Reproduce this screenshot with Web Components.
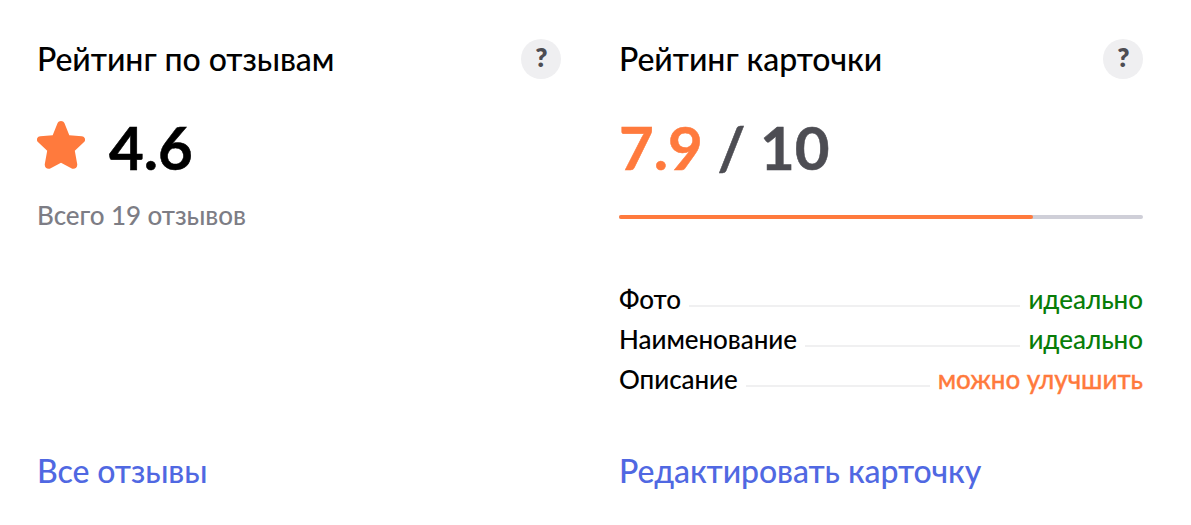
<!DOCTYPE html>
<html lang="ru">
<head>
<meta charset="utf-8">
<title>Рейтинг</title>
<style>
  body {
    margin: 0;
    background: #fff;
    color: #000;
    font-family: Lato, "Open Sans", sans-serif;
  }

  .cards {
    display: grid;
    grid-template-columns: 524px 524px;
    column-gap: 58px;
    box-sizing: border-box;
    height: 525px;
    padding: 39px 0 34px 37px;
  }
</style>
</head>
<body>
<div class="cards">
  <rating-card heading="Рейтинг по отзывам" link="Все отзывы">
    <score-value value="4.6" star></score-value>
    <card-note>Всего 19 отзывов</card-note>
  </rating-card>
  <rating-card heading="Рейтинг карточки" link="Редактировать карточку">
    <score-value value="7.9" max="10"></score-value>
    <score-bar value="7.9" max="10"></score-bar>
    <check-row label="Фото" status="good">идеально</check-row>
    <check-row label="Наименование" status="good">идеально</check-row>
    <check-row label="Описание" status="warn">можно улучшить</check-row>
  </rating-card>
</div>
<script>
"use strict";

(() => {
  customElements.define("help-button", class extends HTMLElement {
    constructor() {
      super();

      this.attachShadow({mode: "open"}).innerHTML = `
        <style>
          :host {
            display: flex;
            flex: none;
            align-items: center;
            justify-content: center;
            box-sizing: border-box;
            width: 40px;
            height: 40px;
            padding: 0 0 4px 1px;
            border-radius: 50%;
            background: #EFEFF1;
            color: #4D4D53;
            font-size: 26px;
            font-weight: 800;
            line-height: 32px;
            cursor: pointer;
          }
        </style>
        <span>?</span>
      `;
    }
  });

  customElements.define("rating-card", class extends HTMLElement {
    constructor() {
      super();

      this.attachShadow({mode: "open"}).innerHTML = `
        <style>
          :host {
            display: flex;
            flex-direction: column;
          }

          header {
            display: flex;
            align-items: center;
            justify-content: space-between;
            height: 40px;
          }

          h2 {
            margin: 0;
            font-size: 32px;
            font-weight: 500;
            letter-spacing: -0.06px;
            line-height: 40px;
          }

          a {
            align-self: flex-start;
            margin-top: auto;
            color: #5068E2;
            font-size: 32px;
            font-weight: 500;
            letter-spacing: -0.09px;
            line-height: 40px;
            text-decoration: none;
          }
        </style>
        <header><h2></h2><help-button></help-button></header>
        <slot></slot>
        <a href="#"></a>
      `;
    }

    connectedCallback() {
      this.shadowRoot.querySelector("h2").textContent = this.getAttribute("heading");
      this.shadowRoot.querySelector("a").textContent = this.getAttribute("link");
    }
  });

  customElements.define("score-value", class extends HTMLElement {
    constructor() {
      super();

      this.attachShadow({mode: "open"}).innerHTML = `
        <style>
          :host {
            display: flex;
            align-items: center;
            height: 72px;
            margin-top: 32px;
            font-size: 60px;
            font-weight: 700;
            line-height: 72px;
            white-space: pre;
            -webkit-text-stroke: 0.5px;
          }

          :host([max]) .value {
            color: #FF7A3D;
          }

          .max {
            color: #4D4D53;
          }

          svg {
            display: none;
            width: 48px;
            height: 48px;
            margin: 0 24px 4px 0;
          }

          :host([star]) svg {
            display: block;
          }
        </style>
        <svg viewBox="0 0 48 48" fill="#FF7A3D">
          <path d="M20.5 2.2C21.8-.7 26.2-.7 27.5 2.2L32.3 14.2L44.7 15.2C48 15.5 49.3 19.2 46.8 21.3L37.8 29.8L40.2 43C40.7 46.5 37.3 49 34.3 47.2L24 41.8L13.7 47.2C10.7 49 7.3 46.5 7.8 43L10.2 29.8L1.2 21.3C-1.3 19.2 0 15.5 3.3 15.2L15.7 14.2Z"/>
        </svg>
        <span class="value"></span><span class="max"></span>
      `;
    }

    connectedCallback() {
      this.shadowRoot.querySelector(".value").textContent = this.getAttribute("value");
      if (this.hasAttribute("max")) {
        this.shadowRoot.querySelector(".max").textContent = " / " + this.getAttribute("max");
      }
    }
  });

  customElements.define("card-note", class extends HTMLElement {
    constructor() {
      super();

      this.attachShadow({mode: "open"}).innerHTML = `
        <style>
          :host {
            display: block;
            margin-top: 12px;
            color: #7D7D85;
            font-size: 26px;
            font-weight: 500;
            letter-spacing: -0.05px;
            line-height: 40px;
          }
        </style>
        <slot></slot>
      `;
    }
  });

  customElements.define("score-bar", class extends HTMLElement {
    constructor() {
      super();

      this.attachShadow({mode: "open"}).innerHTML = `
        <style>
          :host {
            display: block;
            height: 4px;
            margin: 32px 0 60px;
            border-radius: 2px;
            background: #CFCFD8;
          }

          div {
            height: 4px;
            border-radius: 2px;
            background: #FF7A3D;
          }
        </style>
        <div></div>
      `;
    }

    connectedCallback() {
      const part = this.getAttribute("value") / this.getAttribute("max");
      this.shadowRoot.querySelector("div").style.width = part * 100 + "%";
    }
  });

  customElements.define("check-row", class extends HTMLElement {
    constructor() {
      super();

      this.attachShadow({mode: "open"}).innerHTML = `
        <style>
          :host {
            display: flex;
            align-items: center;
            gap: 8px;
            height: 40px;
            font-size: 26px;
            font-weight: 500;
            letter-spacing: -0.05px;
            line-height: 40px;
          }

          .line {
            flex: 1;
            height: 2px;
            margin-top: 14px;
            background: #F0F0F1;
          }

          :host([status="good"]) .status {
            color: #087D08;
          }

          :host([status="warn"]) .status {
            color: #FF7A3D;
            -webkit-text-stroke: 0.3px;
          }
        </style>
        <span class="label"></span>
        <span class="line"></span>
        <span class="status"><slot></slot></span>
      `;
    }

    connectedCallback() {
      this.shadowRoot.querySelector(".label").textContent = this.getAttribute("label");
    }
  });
})();
</script>
</body>
</html>
